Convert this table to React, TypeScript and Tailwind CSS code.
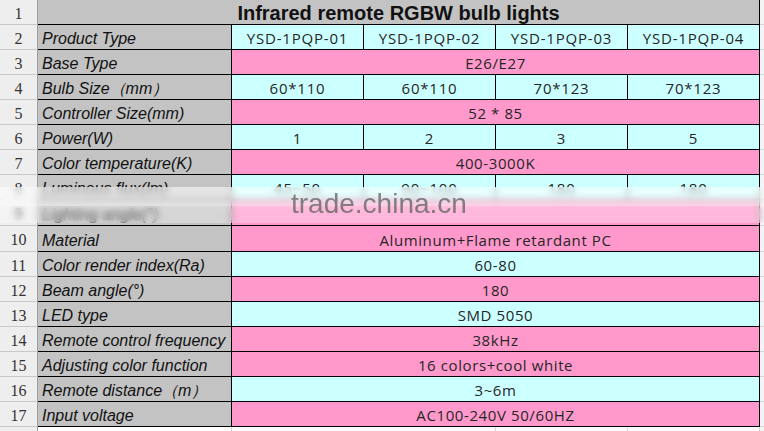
import React from 'react';

type Row = {
  n: number;
  label: string;
  cells: string[];
  tone: 'cyan' | 'pink';
  tall?: boolean;
};

const rows: Row[] = [
  { n: 2, label: 'Product Type', cells: ['YSD-1PQP-01', 'YSD-1PQP-02', 'YSD-1PQP-03', 'YSD-1PQP-04'], tone: 'cyan' },
  { n: 3, label: 'Base Type', cells: ['E26/E27'], tone: 'pink' },
  { n: 4, label: 'Bulb Size（mm）', cells: ['60*110', '60*110', '70*123', '70*123'], tone: 'cyan' },
  { n: 5, label: 'Controller Size(mm)', cells: ['52 * 85'], tone: 'pink' },
  { n: 6, label: 'Power(W)', cells: ['1', '2', '3', '5'], tone: 'cyan' },
  { n: 7, label: 'Color temperature(K)', cells: ['400-3000K'], tone: 'pink' },
  { n: 8, label: 'Luminous flux(lm)', cells: ['45~50', '90~100', '180', '180'], tone: 'cyan' },
  { n: 9, label: 'Lighting angle(°)', cells: [''], tone: 'pink', tall: true },
  { n: 10, label: 'Material', cells: ['Aluminum+Flame retardant PC'], tone: 'pink', tall: true },
  { n: 11, label: 'Color render index(Ra)', cells: ['60-80'], tone: 'cyan' },
  { n: 12, label: 'Beam angle(°)', cells: ['180'], tone: 'pink' },
  { n: 13, label: 'LED type', cells: ['SMD 5050'], tone: 'cyan' },
  { n: 14, label: 'Remote control frequency', cells: ['38kHz'], tone: 'pink' },
  { n: 15, label: 'Adjusting color function', cells: ['16 colors+cool white'], tone: 'pink' },
  { n: 16, label: 'Remote distance（m）', cells: ['3~6m'], tone: 'cyan' },
  { n: 17, label: 'Input voltage', cells: ['AC100-240V 50/60HZ'], tone: 'pink' },
];

const numCell =
  "w-[38px] shrink-0 flex items-center justify-center pt-[3px] bg-[#eeeeee] border-b border-b-[#c8c8c8] border-r border-r-[#9c9c9c] text-[16px] text-[#333] font-['Liberation_Serif',serif]";

const dataText =
  "text-[15px] text-[#262626] font-['Open_Sans','Noto_Sans',sans-serif] whitespace-nowrap";

function SheetRow({ row }: { row: Row }) {
  const bg = row.tone === 'cyan' ? 'bg-[#ccffff]' : 'bg-[#ff99cc]';
  return (
    <div className={row.tall ? 'flex h-[26px]' : 'flex h-[25px]'}>
      <div className={numCell}>{row.n}</div>
      <div className="w-[194px] shrink-0 flex items-center pl-[4px] pt-[4px] bg-[#c3c3c3] border-b border-r border-black italic text-[16px] text-[#111] font-['Liberation_Sans',Arial,sans-serif] whitespace-nowrap">
        {row.label}
      </div>
      {row.cells.length === 1 ? (
        <div className={`w-[528px] shrink-0 flex items-center justify-center pt-[3px] border-b border-r border-black ${bg}`}>
          <span className={`${dataText} tracking-[0.6px]`}>{row.cells[0]}</span>
        </div>
      ) : (
        row.cells.map((c, i) => (
          <div
            key={i}
            className={`w-[132px] shrink-0 flex items-center justify-center pt-[3px] border-b border-r border-black ${bg}`}
          >
            <span className={`${dataText} tracking-[0.8px]`}>{c}</span>
          </div>
        ))
      )}
      <div className="flex-1 bg-[#f4f4f4] border-b border-[#d6d6d6]" />
    </div>
  );
}

export default function App() {
  return (
    <div className="relative w-[764px] h-[431px] overflow-hidden bg-[#f4f4f4]">
      <div className="flex h-[25px]">
        <div className={numCell}>1</div>
        <div className="w-[722px] shrink-0 flex items-center justify-center pt-[1px] bg-[#c3c3c3] border-b border-r border-black font-bold text-[20px] text-[#111] font-['Liberation_Sans',Arial,sans-serif]">
          Infrared remote RGBW bulb lights
        </div>
        <div className="flex-1 bg-[#f4f4f4] border-b border-[#d6d6d6]" />
      </div>

      {rows.map((r) => (
        <SheetRow key={r.n} row={r} />
      ))}

      <div className="flex h-[6px]">
        <div className="w-[38px] shrink-0 bg-[#eeeeee] border-r border-[#9c9c9c]" />
        <div className="w-[194px] shrink-0 bg-white border-r border-[#d6d6d6]" />
        <div className="w-[264px] shrink-0 bg-white border-r border-[#d6d6d6]" />
        <div className="w-[132px] shrink-0 bg-white border-r border-[#d6d6d6]" />
        <div className="w-[132px] shrink-0 bg-white border-r border-[#d6d6d6]" />
        <div className="flex-1 bg-[#f4f4f4]" />
      </div>

      {/* watermark band over rows 8-9 */}
      <div className="absolute left-0 right-0 top-[187px] h-[19px] bg-white/55 backdrop-blur-[3px]" />
      <div className="absolute left-0 right-0 top-[206px] h-[17px] bg-white/30 backdrop-blur-[3px]" />
      <div className="absolute left-[291px] top-[184px] text-[28px] leading-[40px] text-[#666]/80 font-['Liberation_Sans',Arial,sans-serif]">
        trade.china.cn
      </div>
    </div>
  );
}
